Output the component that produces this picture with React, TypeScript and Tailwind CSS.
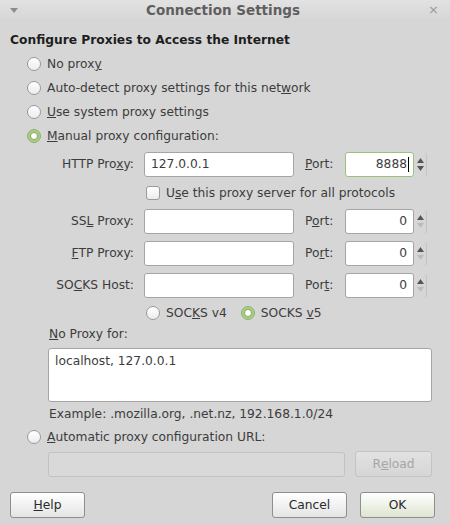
import type { ReactNode } from "react";

function Radio({ checked = false }: { checked?: boolean }) {
  return checked ? (
    <span className="w-[14px] h-[14px] shrink-0 rounded-full border border-[#8fb36a] bg-[#a9cc84] flex items-center justify-center">
      <span className="w-[8px] h-[8px] rounded-full bg-white border border-[#86a862]" />
    </span>
  ) : (
    <span className="w-[14px] h-[14px] shrink-0 rounded-full border border-[#9a9a9a] bg-gradient-to-b from-[#ffffff] to-[#ececec]" />
  );
}

function RadioRow({ checked, children }: { checked?: boolean; children: ReactNode }) {
  return (
    <div className="h-[24px] flex items-center gap-[6px] pl-[27px]">
      <Radio checked={checked} />
      <span>{children}</span>
    </div>
  );
}

function Spin({ down = true }: { down?: boolean }) {
  return (
    <div className="w-[13px] h-[24px] flex flex-col items-center justify-center gap-[3px] border-r border-[#c4c4c4] rounded-r-[3px]">
      <svg width="7" height="5" viewBox="0 0 7 5">
        <path d="M3.5 0 L7 5 L0 5 Z" fill="#555" />
      </svg>
      <svg width="7" height="5" viewBox="0 0 7 5">
        <path d="M0 0 L7 0 L3.5 5 Z" fill={down ? "#555" : "#bbb"} />
      </svg>
    </div>
  );
}

function Row({ label, port }: { label: ReactNode; port: ReactNode }) {
  return (
    <div className="h-[25px] flex items-center">
      <div className="w-[134px] text-right">{label}</div>
      <div className="ml-[10px] w-[150px] h-[25px] bg-white border border-[#a5a5a5] rounded-[3px]" />
      <div className="ml-[11px] w-[40px]">{port}</div>
      <div className="w-[69px] h-[25px] bg-white rounded-[3px] border border-[#a5a5a5] pr-[6px] flex items-center justify-end">
        0
      </div>
      <Spin down={false} />
    </div>
  );
}

function Button({ children, primary = false }: { children: ReactNode; primary?: boolean }) {
  return (
    <div
      className={
        primary
          ? "w-[75px] h-[26px] rounded-[3px] border border-[#8e8e8e] bg-gradient-to-b from-[#ffffff] to-[#dde5d0] text-[#2a2a2a] flex items-center justify-center"
          : "w-[75px] h-[26px] rounded-[3px] border border-[#8e8e8e] bg-gradient-to-b from-[#ffffff] to-[#e4e4e4] text-[#2a2a2a] flex items-center justify-center"
      }
    >
      {children}
    </div>
  );
}

export default function App() {
  return (
    <div
      className="w-[450px] h-[525px] bg-[#d6d6d6] text-[#3c3c3c] text-[12.25px] flex flex-col overflow-hidden"
      style={{ fontFamily: '"DejaVu Sans", sans-serif' }}
    >
      {/* title bar */}
      <div className="h-[20px] flex items-center px-[8px] bg-gradient-to-b from-[#e2e2e2] to-[#d6d6d6]">
        <svg width="8" height="5" viewBox="0 0 8 5" className="ml-[2px]">
          <path d="M0 0 L8 0 L4 5 Z" fill="#8c8c8c" />
        </svg>
        <div className="flex-1 text-center font-bold text-[13.5px] text-[#5f5f5f]">Connection Settings</div>
        <span className="text-[#9a9a9a] text-[13px] mr-[3px]">×</span>
      </div>

      <div className="font-bold text-[#1e1e1e] pl-[10px] mt-[11px] h-[18px] flex items-center">
        Configure Proxies to Access the Internet
      </div>

      <div className="mt-[3px]">
        <RadioRow>
          No prox<u>y</u>
        </RadioRow>
        <RadioRow>
          Auto-detect proxy settings for this net<u>w</u>ork
        </RadioRow>
        <RadioRow>
          <u>U</u>se system proxy settings
        </RadioRow>
        <RadioRow checked>
          <u>M</u>anual proxy configuration:
        </RadioRow>
      </div>

      <div className="mt-[4px] flex flex-col">
        <div className="h-[25px] flex items-center">
          <div className="w-[134px] text-right">
            HTTP Pro<u>x</u>y:
          </div>
          <div className="ml-[10px] w-[150px] h-[25px] bg-white border border-[#a5a5a5] rounded-[3px] px-[6px] flex items-center">
            127.0.0.1
          </div>
          <div className="ml-[11px] w-[40px]">
            <u>P</u>ort:
          </div>
          <div className="w-[69px] h-[25px] bg-white rounded-[3px] border border-[#9cc27a] pr-[4px] flex items-center justify-end">
            8888
            <span className="w-px h-[15px] bg-black ml-[1px]" />
          </div>
          <Spin />
        </div>

        <div className="h-[24px] mt-[4px] flex items-center gap-[6px] pl-[146px]">
          <span className="w-[14px] h-[14px] rounded-[3px] border border-[#9a9a9a] bg-gradient-to-b from-[#ffffff] to-[#ececec]" />
          <span>
            U<u>s</u>e this proxy server for all protocols
          </span>
        </div>

        <div className="mt-[4px] flex flex-col gap-[7px]">
          <Row label={<>SS<u>L</u> Proxy:</>} port={<>P<u>o</u>rt:</>} />
          <Row label={<><u>F</u>TP Proxy:</>} port={<>Po<u>r</u>t:</>} />
          <Row label={<>SO<u>C</u>KS Host:</>} port={<>Por<u>t</u>:</>} />
        </div>

        <div className="h-[22px] mt-[4px] flex items-center pl-[146px]">
          <Radio />
          <span className="ml-[6px]">
            SOC<u>K</u>S v4
          </span>
          <span className="ml-[14px]">
            <Radio checked />
          </span>
          <span className="ml-[6px]">
            SOCKS <u>v</u>5
          </span>
        </div>

        <div className="pl-[49px] h-[20px] flex items-center">
          <span>
            <u>N</u>o Proxy for:
          </span>
        </div>
        <div className="ml-[48px] mt-[4px] w-[384px] h-[54px] bg-white border border-[#a5a5a5] rounded-[3px] px-[6px] pt-[3px]">
          localhost, 127.0.0.1
        </div>
        <div className="pl-[49px] h-[22px] mt-[1px] flex items-center">
          Example: .mozilla.org, .net.nz, 192.168.1.0/24
        </div>
      </div>

      <RadioRow>
        <u>A</u>utomatic proxy configuration URL:
      </RadioRow>

      <div className="mt-[2px] flex items-center pl-[48px]">
        <div className="w-[297px] h-[25px] bg-[#d9d9d9] border border-[#c2c2c2] rounded-[3px]" />
        <div className="ml-[10px] w-[77px] h-[26px] rounded-[3px] border border-[#c4c4c4] bg-gradient-to-b from-[#e2e2e2] to-[#d6d6d6] text-[#a6a6a6] flex items-center justify-center">
          R<u>e</u>load
        </div>
      </div>

      <div className="mt-[15px] flex items-center pl-[10px] pr-[15px]">
        <Button>
          <u>H</u>elp
        </Button>
        <div className="flex-1" />
        <Button>Cancel</Button>
        <div className="w-[13px]" />
        <Button primary>OK</Button>
      </div>
    </div>
  );
}
